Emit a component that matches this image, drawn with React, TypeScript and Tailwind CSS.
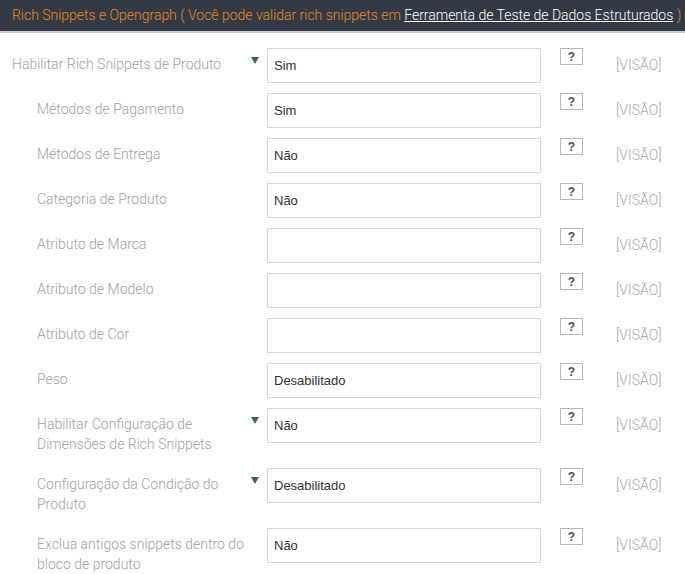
import React from "react";

interface Row {
  label: string;
  value: string;
  indent: boolean;
  arrow: boolean;
}

const ROWS: Row[] = [
  { label: "Habilitar Rich Snippets de Produto", value: "Sim", indent: false, arrow: true },
  { label: "Métodos de Pagamento", value: "Sim", indent: true, arrow: false },
  { label: "Métodos de Entrega", value: "Não", indent: true, arrow: false },
  { label: "Categoria de Produto", value: "Não", indent: true, arrow: false },
  { label: "Atributo de Marca", value: "", indent: true, arrow: false },
  { label: "Atributo de Modelo", value: "", indent: true, arrow: false },
  { label: "Atributo de Cor", value: "", indent: true, arrow: false },
  { label: "Peso", value: "Desabilitado", indent: true, arrow: false },
  { label: "Habilitar Configuração de Dimensões de Rich Snippets", value: "Não", indent: true, arrow: true },
  { label: "Configuração da Condição do Produto", value: "Desabilitado", indent: true, arrow: true },
  { label: "Exclua antigos snippets dentro do bloco de produto", value: "Não", indent: true, arrow: false },
];

export default function App() {
  return (
    <div className="w-[685px] h-[574px] overflow-hidden bg-white font-['Roboto',sans-serif]">
      {/* Header */}
      <div className="h-[33px] bg-[#333a45] border-b-2 border-[#c9cbcf] pl-[12px] flex items-center whitespace-nowrap text-[14px] font-light tracking-[-0.02px] text-[#e58a2c]">
        Rich Snippets e Opengraph ( Você pode validar rich snippets em&nbsp;
        <a href="#" className="text-white underline">
          Ferramenta de Teste de Dados Estruturados
        </a>
        &nbsp;)
      </div>

      {/* Rows */}
      <div className="pt-[15px]">
        {ROWS.map((r) => (
          <div key={r.label} className="flex items-start">
            <div
              className={`w-[267px] flex items-start shrink-0 ${r.indent ? "pl-[37px]" : "pl-[12px]"}`}
            >
              <div className="flex-1 pt-[6px] pb-[14px] pr-[14px] text-[14px] font-light leading-[20px] text-[#9c9fa3]">
                {r.label}
              </div>
              {r.arrow && (
                <svg width="8" height="7" viewBox="0 0 8 7" className="mt-[9px] mr-[8px] shrink-0">
                  <polygon points="0,0 8,0 4,7" fill="#3b5f6b" />
                </svg>
              )}
            </div>
            <div className="w-[274px] h-[35px] mb-[10px] shrink-0 border border-[#d6d6d6] bg-white flex items-center pl-[6px] font-['Liberation_Sans',Arial,sans-serif] text-[13px] text-[#303030]">
              {r.value}
            </div>
            <div className="ml-[19px] w-[23px] h-[17px] shrink-0 border border-[#b9b9b9] bg-white flex items-center justify-center font-['Liberation_Sans',Arial,sans-serif] font-bold text-[12px] text-[#4a4f57]">
              ?
            </div>
            <div className="ml-[33px] pt-[7px] text-[14px] font-light leading-[20px] text-[#a8a8a8]">
              [VISÃO]
            </div>
          </div>
        ))}
      </div>
    </div>
  );
}
